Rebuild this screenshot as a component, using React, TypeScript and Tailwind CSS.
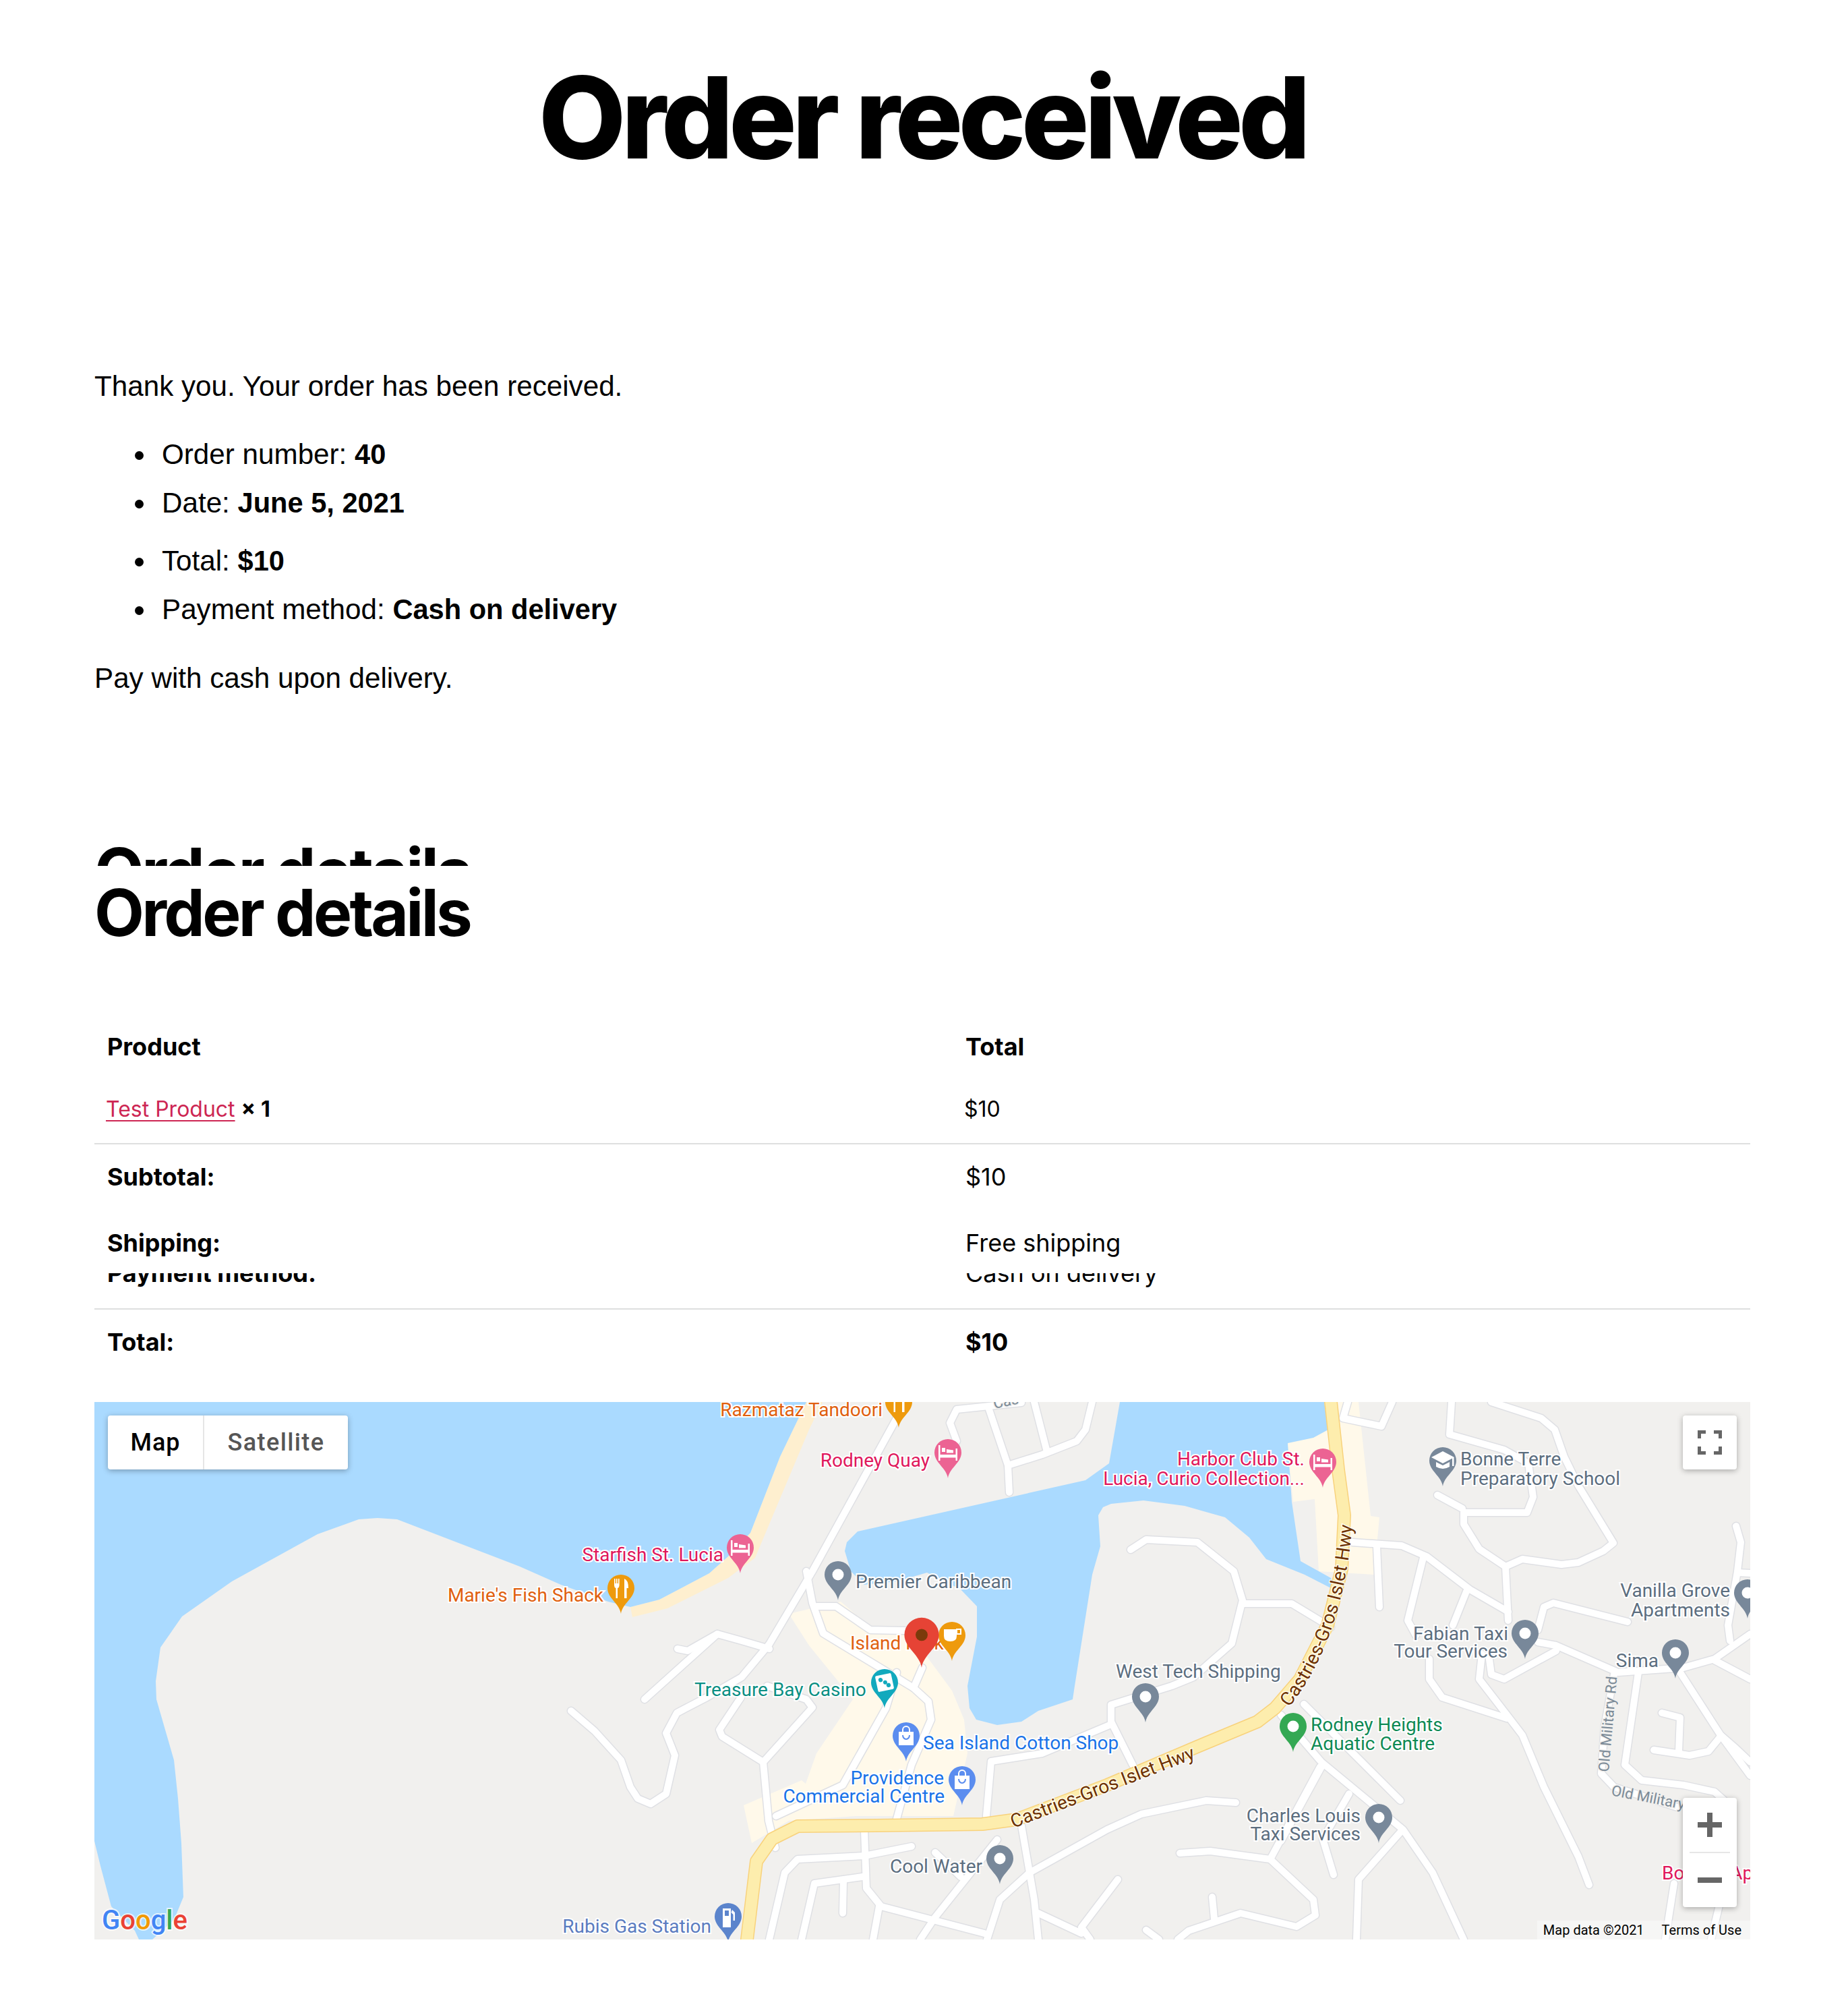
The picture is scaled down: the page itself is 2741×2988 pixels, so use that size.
import React from 'react';

// Wasser- und Strassenkoordinaten sind Seitenpixel, die viewBox der Karte beginnt bei 140,2079
const waterAreas = [
  '140,2079 1196,2079 1157,2160 1113,2273 1080,2308 1052,2333 978,2372 935,2383 902,2375 832,2350 771,2323 589,2253 560,2251 532,2253 471,2275 344,2345 270,2397 238,2443 231,2493 232,2520 258,2610 264,2667 269,2733 272,2813 258,2847 226,2876 206,2876 200,2863 165,2827 149,2767 140,2730',
  '1661,2079 1645,2170 1610,2195 1272,2271 1256,2287 1253,2300 1262,2330 1282,2350 1330,2345 1375,2332 1425,2357 1449,2382 1449,2427 1435,2500 1438,2533 1448,2550 1479,2558 1515,2553 1540,2537 1591,2520 1594,2500 1620,2335 1632,2293 1629,2247 1636,2235 1648,2230 1696,2225 1757,2233 1817,2250 1853,2280 1878,2312 1935,2335 1980,2358 1974,2340 1929,2315 1916,2227 1910,2140 1948,2132 1970,2120 1964,2079',
];

const urbanAreas = [
  '1909,2138 1970,2120 1960,2079 2015,2079 2033,2248 2046,2250 2038,2335 1956,2330 1950,2223 1918,2227',
  '1170,2393 1247,2375 1291,2413 1350,2423 1412,2507 1430,2550 1435,2600 1414,2693 1270,2693 1170,2700 1115,2733 1103,2677 1189,2640 1195,2645 1211,2600 1265,2520 1200,2440',
];

const beachStrip = '935,2383 978,2372 1052,2333 1080,2308 1113,2273 1157,2160 1196,2079 1220,2079 1200,2120 1120,2310 1080,2340 990,2385 938,2398';

const roads = [
  '847,2537 882,2567 921,2610 935,2650 946,2667 965,2675 988,2660 1001,2603 988,2570 1004,2540 1048,2517 1100,2487 1141,2438 1205,2330 1330,2103 1340,2079',
  '1005,2445 1020,2448 1064,2423 1100,2433 1141,2445',
  '1064,2423 956,2520',
  '1099,2517 1067,2565 1071,2575 1132,2613 1140,2700 1150,2740',
  '1132,2613 1205,2532 1196,2520 1138,2500',
  '1212,2382 1240,2382 1291,2417 1342,2418',
  '1196,2330 1205,2377 1221,2422 1355,2503 1377,2523 1381,2550 1352,2617 1330,2697',
  '1368,2473 1355,2503',
  '1330,2480 1314,2533 1250,2647 1151,2693',
  '1534,2079 1553,2153',
  '1467,2090 1495,2173 1497,2213',
  '1620,2079 1610,2120 1597,2137 1546,2157 1495,2173',
  '1515,2080 1419,2090 1409,2110 1419,2137',
  '1677,2298 1700,2283 1776,2287 1830,2330 1843,2373 1827,2437 1770,2487 1738,2500 1648,2528 1648,2553 1680,2617',
  '1648,2557 1546,2600 1470,2612 1463,2693',
  '1843,2378 1916,2378 1974,2413',
  '1999,2079 1992,2103 2049,2115 2065,2079',
  '2212,2079 2286,2103 2306,2120 2320,2160 2341,2203 2393,2288 2378,2300 2341,2317 2316,2320 2258,2312 2233,2323',
  '2153,2079 2150,2127 2231,2150 2267,2170 2274,2220 2265,2243 2171,2243 2171,2260 2194,2297 2233,2323 2237,2403',
  '2132,2217 2169,2237',
  '2006,2287 2079,2292 2116,2308 2180,2357 2237,2390',
  '2042,2293 2046,2383',
  '2111,2310 2088,2403 2100,2425',
  '2175,2360 2155,2410',
  '2414,2405 2304,2377 2290,2383 2281,2417',
  '2281,2435 2308,2440 2400,2480 2497,2473 2543,2460 2596,2423',
  '2308,2448 2231,2490 2212,2483 2208,2453',
  '2120,2460 2120,2490 2139,2517 2235,2548',
  '2198,2453 2194,2490 2235,2543 2258,2573 2290,2650 2341,2753 2357,2795',
  '2575,2263 2582,2287 2577,2330 2563,2410 2566,2433',
  '2577,2332 2596,2333',
  '2543,2462 2596,2490',
  '2492,2480 2552,2573 2575,2593 2596,2613',
  '2552,2573 2596,2633',
  '2394,2483 2380,2560 2375,2630 2394,2650 2488,2680',
  '2430,2480 2410,2617 2435,2640 2497,2647 2543,2657 2561,2673',
  '2465,2540 2492,2547 2490,2597',
  '2453,2595 2506,2603 2534,2597 2552,2575',
  '2483,2793 2470,2876',
  '2552,2817 2538,2876',
  '1934,2527 2077,2670',
  '1900,2543 1960,2613 2081,2713 2125,2777 2171,2876',
  '1960,2620 1900,2730',
  '2001,2660 1962,2727 1978,2780',
  '2077,2717 2015,2787 2012,2876',
  '1750,2748 1795,2745 1884,2757 1948,2817 1951,2840 1923,2857 1840,2837 1763,2863 1747,2876',
  '1884,2757 1958,2620',
  '1798,2813 1801,2845',
  '1700,2862 1719,2876',
  '1658,2787 1604,2858 1617,2876',
  '1515,2707 1534,2817 1540,2876',
  '1540,2837 1604,2867',
  '1833,2673 1789,2670 1693,2690 1642,2713 1527,2777 1483,2817 1464,2876',
  '1282,2713 1285,2800 1307,2827 1460,2867',
  '1352,2738 1282,2752 1183,2757 1164,2777 1141,2876',
  '1279,2783 1208,2793 1189,2876',
  '1251,2790 1250,2837',
  '1479,2728 1387,2843 1365,2876',
  '1304,2827 1295,2876',
  '1387,2747 1425,2783',
];

const highway = '1974,2079 1985,2180 1994,2247 1990,2327 1969,2410 1928,2490 1891,2533 1865,2553 1776,2590 1642,2647 1508,2698 1457,2705 1300,2707 1183,2708 1145,2727 1122,2760 1108,2876';

const ORANGE = '#e0600f';
const PINK = '#e0185c';
const SLATE = '#5c6e7f';
const TEAL = '#0b8f83';
const BLUE = '#1a73e8';
const GREEN = '#0f8a55';

const labels: { text: string; x: number; y: number; color: string; anchor?: 'start' | 'end' }[] = [
  { text: 'Razmataz Tandoori', x: 1309, y: 2100, color: ORANGE, anchor: 'end' },
  { text: 'Rodney Quay', x: 1379, y: 2175, color: PINK, anchor: 'end' },
  { text: 'Harbor Club St.', x: 1935, y: 2173, color: PINK, anchor: 'end' },
  { text: 'Lucia, Curio Collection...', x: 1935, y: 2202, color: PINK, anchor: 'end' },
  { text: 'Starfish St. Lucia', x: 1073, y: 2315, color: PINK, anchor: 'end' },
  { text: "Marie's Fish Shack", x: 895, y: 2375, color: ORANGE, anchor: 'end' },
  { text: 'Premier Caribbean', x: 1269, y: 2355, color: SLATE },
  { text: 'Island Park', x: 1261, y: 2446, color: ORANGE },
  { text: 'Treasure Bay Casino', x: 1030, y: 2515, color: TEAL },
  { text: 'West Tech Shipping', x: 1655, y: 2488, color: SLATE },
  { text: 'Sea Island Cotton Shop', x: 1369, y: 2594, color: BLUE },
  { text: 'Providence', x: 1400, y: 2646, color: BLUE, anchor: 'end' },
  { text: 'Commercial Centre', x: 1401, y: 2673, color: BLUE, anchor: 'end' },
  { text: 'Bonne Terre', x: 2166, y: 2173, color: SLATE },
  { text: 'Preparatory School', x: 2166, y: 2202, color: SLATE },
  { text: 'Vanilla Grove', x: 2566, y: 2368, color: SLATE, anchor: 'end' },
  { text: 'Apartments', x: 2566, y: 2397, color: SLATE, anchor: 'end' },
  { text: 'Fabian Taxi', x: 2237, y: 2432, color: SLATE, anchor: 'end' },
  { text: 'Tour Services', x: 2236, y: 2458, color: SLATE, anchor: 'end' },
  { text: 'Sima', x: 2460, y: 2472, color: SLATE, anchor: 'end' },
  { text: 'Rodney Heights', x: 1944, y: 2567, color: GREEN },
  { text: 'Aquatic Centre', x: 1944, y: 2595, color: GREEN },
  { text: 'Charles Louis', x: 2018, y: 2702, color: SLATE, anchor: 'end' },
  { text: 'Taxi Services', x: 2018, y: 2729, color: SLATE, anchor: 'end' },
  { text: 'Cool Water', x: 1457, y: 2777, color: SLATE, anchor: 'end' },
  { text: 'Rubis Gas Station', x: 1055, y: 2866, color: '#5b7cc0', anchor: 'end' },
  { text: 'Boucan Ap', x: 2465, y: 2787, color: PINK },
];

type PinIcon = 'dot' | 'bed' | 'fork' | 'cup' | 'dice' | 'bag' | 'cap' | 'fuel' | 'red';

const pins: { x: number; y: number; color: string; icon: PinIcon }[] = [
  { x: 1333, y: 2117, color: '#ee9a0d', icon: 'fork' },
  { x: 1406, y: 2192, color: '#ec6393', icon: 'bed' },
  { x: 1962, y: 2206, color: '#ec6393', icon: 'bed' },
  { x: 1098, y: 2333, color: '#ec6393', icon: 'bed' },
  { x: 921, y: 2393, color: '#ee9a0d', icon: 'fork' },
  { x: 1243, y: 2373, color: '#78889a', icon: 'dot' },
  { x: 1412, y: 2463, color: '#ee9a0d', icon: 'cup' },
  { x: 1312, y: 2533, color: '#12a9bd', icon: 'dice' },
  { x: 1699, y: 2554, color: '#78889a', icon: 'dot' },
  { x: 1344, y: 2612, color: '#5b8def', icon: 'bag' },
  { x: 1427, y: 2677, color: '#5b8def', icon: 'bag' },
  { x: 2140, y: 2204, color: '#78889a', icon: 'cap' },
  { x: 2592, y: 2400, color: '#78889a', icon: 'dot' },
  { x: 2262, y: 2460, color: '#78889a', icon: 'dot' },
  { x: 2485, y: 2489, color: '#78889a', icon: 'dot' },
  { x: 1918, y: 2598, color: '#34a853', icon: 'dot' },
  { x: 2045, y: 2733, color: '#78889a', icon: 'dot' },
  { x: 1483, y: 2794, color: '#78889a', icon: 'dot' },
  { x: 1080, y: 2880, color: '#5b84cc', icon: 'fuel' },
  { x: 1367, y: 2473, color: '#e64335', icon: 'red' },
];

const PinGlyph = ({ icon }: { icon: PinIcon }) => {
  if (icon === 'dot') return <circle cx="0" cy="-38" r="8.5" fill="#fff" />;
  if (icon === 'red') return <circle cx="0" cy="-38" r="7" fill="#7b3a0b" />;
  if (icon === 'bed')
    return (
      <g fill="#fff">
        <path d="M-14,-49 h2.5 v14 h23 v-9 h2.5 v18 h-2.5 v-4.5 h-23 v4.5 h-2.5z" />
        <rect x="-9" y="-45" width="5" height="6" />
        <path d="M-2,-43 l10,1.5 v4 h-10z" />
      </g>
    );
  if (icon === 'fork')
    return (
      <g fill="#fff">
        <path d="M-10,-52 h1.6 v7 h1.4 v-7 h1.6 v7 h1.4 v-7 h1.6 v10 q0,3 -2.6,4 v15 h-2.5 v-15 q-2.5,-1 -2.5,-4z" />
        <path d="M5,-52 q6,2 6,14 h-2.5 v15 h-3.5z" />
      </g>
    );
  if (icon === 'cup')
    return (
      <g>
        <path d="M-12,-47 h19 v10 q0,8 -9.5,8 q-9.5,0 -9.5,-8z" fill="#fff" />
        <rect x="7" y="-47" width="6" height="7" fill="none" stroke="#fff" strokeWidth="2" />
      </g>
    );
  if (icon === 'dice')
    return (
      <g transform="rotate(-12 0 -38)">
        <rect x="-12" y="-50" width="24" height="24" rx="2" fill="#fff" />
        <circle cx="-5" cy="-43" r="3.2" fill="#12a9bd" />
        <circle cx="5" cy="-33" r="3.2" fill="#12a9bd" />
        <circle cx="1" cy="-38" r="3" fill="#12a9bd" />
      </g>
    );
  if (icon === 'bag')
    return (
      <g>
        <path d="M-5,-44 v-3 a5,5 0 0 1 10,0 v3" fill="none" stroke="#fff" strokeWidth="2" />
        <rect x="-11" y="-44" width="22" height="20" fill="#fff" />
        <path d="M-5,-39 a5,6 0 0 0 10,0" fill="none" stroke="#5b8def" strokeWidth="2" />
      </g>
    );
  if (icon === 'cap')
    return (
      <g>
        <path d="M0,-52 L17,-43 L0,-34 L-17,-43z" fill="#fff" />
        <path d="M-10,-36 v7 q10,6 20,0 v-7 l-10,5z" fill="#fff" />
        <rect x="14" y="-43" width="2.5" height="13" fill="#fff" />
      </g>
    );
  return (
    <g fill="#fff">
      <path d="M-8,-50 h12 v28 h-12z" />
      <rect x="-5" y="-47" width="6" height="8" fill="#5b84cc" />
      <path d="M6,-48 l4,4 v12 h-2.5 v-9 l-3,-3z" />
    </g>
  );
};

const MapPin = ({ x, y, color, icon }: { x: number; y: number; color: string; icon: PinIcon }) => (
  <g transform={`translate(${x} ${y})${icon === 'red' ? ' scale(1.28)' : ''}`}>
    <path d="M0,0 C-2,-15 -20,-23 -20,-38 A20,20 0 1 1 20,-38 C20,-23 2,-15 0,0Z" fill={color} />
    <PinGlyph icon={icon} />
  </g>
);

const MapDrawing = () => (
  <svg viewBox="140 2079 2456 797" className="block w-full h-full" fontFamily="Roboto, sans-serif">
    <rect x="140" y="2079" width="2456" height="797" fill="#f1f0ee" />
    {urbanAreas.map((p) => (
      <polygon key={p} points={p} fill="#fff9ea" />
    ))}
    <polygon points={beachStrip} fill="#feefcf" />
    {waterAreas.map((p) => (
      <polygon key={p} points={p} fill="#aadaff" />
    ))}
    <g fill="none" strokeLinejoin="round" strokeLinecap="round">
      {roads.map((p) => (
        <polyline key={p} points={p} stroke="#dfe0e4" strokeWidth="13" />
      ))}
      {roads.map((p) => (
        <polyline key={p} points={p} stroke="#fff" strokeWidth="10" />
      ))}
      <polyline points={highway} stroke="#f8d27c" strokeWidth="20" />
      <polyline points={highway} stroke="#fdedad" strokeWidth="17" />
    </g>

    {/* Strassennamen */}
    <path id="hwy-upper" d="M1912,2532 C1965,2465 1995,2380 2006,2262" fill="none" />
    <g fontSize="28" fill="#6e3200" stroke="#fff" strokeWidth="3" paintOrder="stroke" strokeOpacity="0.8">
      <text>
        <textPath href="#hwy-upper">Castries-Gros Islet Hwy</textPath>
      </text>
      <text transform="translate(1503 2711) rotate(-21)">Castries-Gros Islet Hwy</text>
    </g>
    <g fontSize="22" fill="#7b8a97" stroke="#f1f0ee" strokeWidth="3" paintOrder="stroke">
      <text transform="translate(1475 2089) rotate(-12)">Cas</text>
      <text transform="translate(2386 2628) rotate(-85)">Old Military Rd</text>
      <text transform="translate(2389 2662) rotate(11)">Old Military Rd</text>
    </g>

    {labels.map((l) => (
      <text
        key={l.text}
        x={l.x}
        y={l.y}
        fontSize="28"
        textAnchor={l.anchor ?? 'start'}
        fill={l.color}
        stroke="#fff"
        strokeWidth="4"
        paintOrder="stroke"
      >
        {l.text}
      </text>
    ))}

    {pins.map((p) => (
      <MapPin key={`${p.x}-${p.y}`} {...p} />
    ))}

    {/* Google Schriftzug */}
    <text x="151" y="2861" fontSize="40" fontWeight="500" stroke="#fff" strokeWidth="4" paintOrder="stroke" strokeOpacity="0.7">
      <tspan fill="#4285f4">G</tspan>
      <tspan fill="#ea4335">o</tspan>
      <tspan fill="#f29900">o</tspan>
      <tspan fill="#4285f4">g</tspan>
      <tspan fill="#34a853">l</tspan>
      <tspan fill="#ea4335">e</tspan>
    </text>
  </svg>
);

const MapControls = () => (
  <>
    <div className="absolute left-[20px] top-[20px] flex h-[80px] w-[356px] rounded-[4px] bg-white text-[36px] font-medium font-[Roboto,sans-serif] shadow-[0_2px_8px_rgba(0,0,0,0.3)]">
      <div className="flex w-[143px] items-center justify-center border-r-2 border-[#e6e6e6] text-black tracking-[1px]">Map</div>
      <div className="flex flex-1 items-center justify-center text-[#565656] tracking-[1.4px]">Satellite</div>
    </div>
    <div className="absolute right-[20px] top-[20px] flex h-[80px] w-[80px] items-center justify-center rounded-[4px] bg-white shadow-[0_2px_8px_rgba(0,0,0,0.3)]">
      <svg width="36" height="36" viewBox="0 0 36 36" fill="none" stroke="#666" strokeWidth="5">
        <path d="M2.5,12 V2.5 H12 M24,2.5 H33.5 V12 M33.5,24 V33.5 H24 M12,33.5 H2.5 V24" />
      </svg>
    </div>
    <div className="absolute right-[20px] bottom-[48px] flex h-[162px] w-[80px] flex-col items-center rounded-[4px] bg-white shadow-[0_2px_8px_rgba(0,0,0,0.3)]">
      <div className="flex h-[80px] w-full items-center justify-center">
        <svg width="36" height="36" viewBox="0 0 36 36" fill="#666">
          <path d="M14,0 H22 V14 H36 V22 H22 V36 H14 V22 H0 V14 H14Z" />
        </svg>
      </div>
      <div className="h-[2px] w-[60px] bg-[#e6e6e6]" />
      <div className="flex h-[80px] w-full items-center justify-center">
        <svg width="36" height="8" viewBox="0 0 36 8" fill="#666">
          <rect width="36" height="8" />
        </svg>
      </div>
    </div>
    <div className="absolute right-0 bottom-0 flex h-[28px] items-center gap-[26px] bg-white/40 pl-[9px] pr-[13px] text-[20px] text-black font-[Roboto,sans-serif]">
      <span>Map data ©2021</span>
      <span>Terms of Use</span>
    </div>
  </>
);

const SummaryRow = ({ label, value, boldValue = false }: { label: string; value: string; boldValue?: boolean }) => (
  <div className="grid grid-cols-[1274px_1fr] text-[36px] leading-[54px]">
    <div className="pl-[19px] font-bold">{label}</div>
    <div className={`pl-[18px] ${boldValue ? 'font-bold' : ''}`}>{value}</div>
  </div>
);

const OrderTable = () => (
  <div className="mt-[117px]">
    <SummaryRow label="Product" value="Total" boldValue />
    <div className="mt-[39px] grid grid-cols-[1274px_1fr] border-b-2 border-[#dedfdf] pb-[23px] text-[32px] leading-[54px]">
      <div className="pl-[17px]">
        <a href="#" className="text-[#cd2653] underline underline-offset-[5px] decoration-2">
          Test Product
        </a>{' '}
        <strong className="font-bold">× 1</strong>
      </div>
      <div className="pl-[16px]">$10</div>
    </div>
    <div className="pt-[21px]">
      <SummaryRow label="Subtotal:" value="$10" />
    </div>
    <div className="mt-[44px]">
      <SummaryRow label="Shipping:" value="Free shipping" />
    </div>
    {/* Zeile wird oben abgeschnitten */}
    <div className="mt-[18px] h-[54px] overflow-hidden border-b-2 border-[#dedfdf]">
      <div className="-mt-[27px]">
        <SummaryRow label="Payment method:" value="Cash on delivery" />
      </div>
    </div>
    <div className="mt-[21px]">
      <SummaryRow label="Total:" value="$10" boldValue />
    </div>
  </div>
);

const OrderItem = ({ label, value, className = '' }: { label: string; value: string; className?: string }) => (
  <li className={`relative before:absolute before:left-[-40px] before:top-[31px] before:size-[13px] before:rounded-full before:bg-black before:content-[''] ${className}`}>
    {label} <strong className="text-[41.6px] font-bold">{value}</strong>
  </li>
);

export default function App() {
  return (
    <div className="min-h-[2988px] bg-white text-black font-[Inter,sans-serif]">
      <h1 className="pt-[79px] pr-[5px] text-center text-[168px] font-extrabold leading-[191px] tracking-[-0.041em]">
        Order received
      </h1>

      <main className="px-[140px] pr-[145px]">
        <div className="font-['Liberation_Sans',sans-serif]">
          <p className="mt-[273px] text-[42.2px] leading-[60px]">Thank you. Your order has been received.</p>

          <ul className="mt-[35px] list-none pl-[100px] text-[42.2px] leading-[72px]">
            <OrderItem label="Order number:" value="40" />
            <OrderItem label="Date:" value="June 5, 2021" />
            <OrderItem label="Total:" value="$10" className="mt-[14px]" />
            <OrderItem label="Payment method:" value="Cash on delivery" />
          </ul>

          <p className="mt-[36px] text-[42.2px] leading-[60px]">Pay with cash upon delivery.</p>
        </div>

        <div className="mt-[201px] h-[47px] overflow-hidden">
          <h2 className="text-[96px] font-bold leading-[110px] tracking-[-0.0385em]">Order details</h2>
        </div>
        <h2 className="mt-[14px] text-[96px] font-bold leading-[110px] tracking-[-0.0385em]">Order details</h2>

        <OrderTable />

        <div className="relative mt-[62px] h-[797px] w-[2456px] overflow-hidden">
          <MapDrawing />
          <MapControls />
        </div>
      </main>
    </div>
  );
}
